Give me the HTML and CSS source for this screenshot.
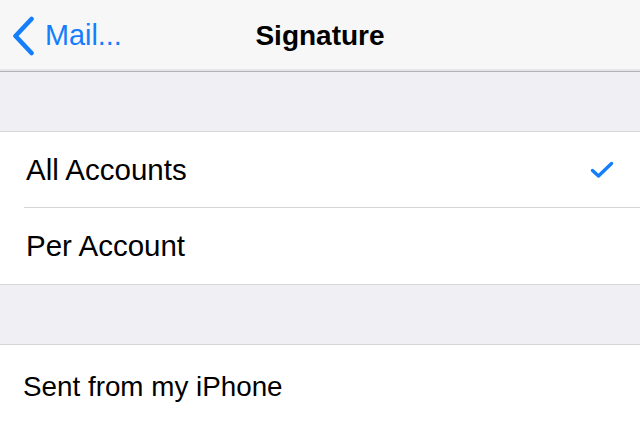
FILE: index.html
```html
<!DOCTYPE html>
<html>
<head>
<meta charset="utf-8">
<link rel="stylesheet" href="styles.css">
</head>
<body>
<div class="screen">
  <header class="nav">
    <div class="back">
      <svg class="chev" width="26" height="40" viewBox="0 0 26 40"><path d="M20.5 3 L4.5 20 L20.5 37" fill="none" stroke="#157efb" stroke-width="4.6" stroke-linecap="round" stroke-linejoin="round"/></svg>
      <span class="back-label">Mail...</span>
    </div>
    <div class="title">Signature</div>
  </header>
  <div class="spacer"></div>
  <section class="group">
    <div class="row">
      <span class="label">All Accounts</span>
      <svg class="check" width="26" height="20" viewBox="0 0 26 20"><path d="M3.5 10.5 L9.5 16 L22.5 3.5" fill="none" stroke="#157efb" stroke-width="3.4" stroke-linecap="round" stroke-linejoin="round"/></svg>
    </div>
    <div class="row">
      <span class="label">Per Account</span>
    </div>
  </section>
  <div class="spacer spacer2"></div>
  <section class="group sig">
    <div class="sig-text">Sent from my iPhone</div>
  </section>
</div>
</body>
</html>
```
FILE: styles.css
```css
html, body {
  margin: 0;
  padding: 0;
  background: #ffffff;
  overflow: hidden;
}
.screen {
  width: 640px;
  height: 425px;
  font-family: "Liberation Sans", Arial, sans-serif;
  color: #000;
  overflow: hidden;
}
.nav {
  height: 71px;
  background: #f7f7f8;
  border-bottom: 1px solid #b4b4b7;
  box-shadow: inset 0 -2px 0 #e6e6e8;
  display: grid;
  grid-template-columns: 1fr auto 1fr;
  align-items: center;
}
.back {
  display: flex;
  align-items: center;
  padding-left: 11px;
  gap: 8px;
  color: #157efb;
}
.chev {
  display: block;
  margin-top: 1px;
}
.back-label {
  font-size: 28.8px;
}
.title {
  font-size: 28px;
  font-weight: bold;
}
.spacer {
  height: 59px;
  background: #efeff4;
  border-bottom: 1px solid #d6d6da;
}
.group {
  background: #ffffff;
  border-bottom: 1px solid #d6d6da;
}
.row {
  height: 75px;
  margin-left: 24px;
  padding-right: 25px;
  display: flex;
  align-items: center;
  justify-content: space-between;
  border-bottom: 1px solid #d6d6da;
}
.row:last-child {
  border-bottom: none;
  height: 76px;
}
.label {
  font-size: 29.5px;
  padding-left: 2px;
}
.check {
  display: block;
  margin-top: 1px;
}
.sig {
  border-bottom: none;
  height: 80px;
}
.sig-text {
  font-size: 27.8px;
  padding-left: 23px;
  padding-top: 26px;
}
```
